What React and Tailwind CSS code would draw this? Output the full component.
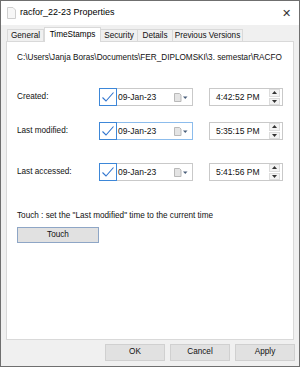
import React from 'react';

const tabs = [
  { label: 'General', w: 'w-[37px]' },
  { label: 'TimeStamps', w: 'w-[57px]', active: true },
  { label: 'Security', w: 'w-[37px]' },
  { label: 'Details', w: 'w-[35px]' },
  { label: 'Previous Versions', w: 'w-[70px]' },
];

const rows = [
  { label: 'Created:', date: '09-Jan-23', time: '4:42:52 PM', mt: 'mt-[24px]' },
  { label: 'Last modified:', date: '09-Jan-23', time: '5:35:15 PM', mt: 'mt-[16px]', focus: true },
  { label: 'Last accessed:', date: '09-Jan-23', time: '5:41:56 PM', mt: 'mt-[23px]' },
];

const Check = () => (
  <svg width="18" height="18" viewBox="0 0 18 18" className="-my-px -ml-px shrink-0">
    <rect x="0.5" y="0.5" width="17" height="17" fill="#fff" stroke="#3d87d8" />
    <path d="M3.5 9.5 L7 13 L14.5 4.5" fill="none" stroke="#2f74cf" strokeWidth="1.1" />
  </svg>
);

const CalIcon = () => (
  <svg width="14" height="9" viewBox="0 0 14 9" className="shrink-0">
    <path d="M0.5 0.5 H5.5 L7 2 V8.5 H0.5 Z" fill="#e4e4e4" stroke="#b9b9b9" />
    <path d="M9 3.5 H13.5 L11.25 6 Z" fill="#4a5f7a" />
  </svg>
);

const Spin = () => (
  <div className="flex flex-col w-[11px] h-[16px] mr-[2px] gap-px">
    <div className="flex-1 bg-[#f3f3f3] border border-[#dcdcdc] flex items-center justify-center">
      <svg width="5" height="3" viewBox="0 0 5 3"><path d="M0 3 L2.5 0 L5 3 Z" fill="#333" /></svg>
    </div>
    <div className="flex-1 bg-[#f3f3f3] border border-[#dcdcdc] flex items-center justify-center">
      <svg width="5" height="3" viewBox="0 0 5 3"><path d="M0 0 L2.5 3 L5 0 Z" fill="#333" /></svg>
    </div>
  </div>
);

export default function App() {
  return (
    <div className="w-[300px] h-[367px] border border-[#6f6f6f] bg-[#f0f0f0] flex flex-col font-['Liberation_Sans',Arial,sans-serif] text-[8.2px] text-[#111] overflow-hidden">
      {/* title bar */}
      <div className="h-[24px] bg-white flex items-center shrink-0">
        <svg width="9" height="12" viewBox="0 0 9 12" className="ml-[6px]">
          <path d="M0.5 0.5 H6 L8.5 3 V11.5 H0.5 Z" fill="#f7f7f7" stroke="#cfcfcf" />
        </svg>
        <span className="ml-[4px] text-[9px] text-black">racfor_22-23 Properties</span>
        <span className="ml-auto mr-[8px] text-[11px] leading-none text-[#333] font-['DejaVu_Sans',sans-serif] font-light">✕</span>
      </div>

      {/* tabs */}
      <div className="flex items-end ml-[6px] mt-[2px] h-[15px] -mb-px relative z-10 shrink-0">
        {tabs.map((t) =>
          t.active ? (
            <div key={t.label} className={`${t.w} h-[15px] bg-white border border-b-0 border-[#d9d9d9] flex items-center justify-center text-black`}>
              {t.label}
            </div>
          ) : (
            <div key={t.label} className={`${t.w} h-[13px] border border-b-0 border-[#d9d9d9] border-l-0 first:border-l flex items-center justify-center`}>
              {t.label}
            </div>
          )
        )}
      </div>

      {/* panel */}
      <div className="mx-[5px] h-[299px] bg-white border border-[#d9d9d9] flex flex-col pl-[10px] pt-[9px] shrink-0">
        <div className="leading-[13px] whitespace-nowrap">C:\Users\Janja Boras\Documents\FER_DIPLOMSKI\3. semestar\RACFO</div>

        {rows.map((r) => (
          <div key={r.label} className={`${r.mt} flex items-center h-[18px]`}>
            <div className="w-[82px]">{r.label}</div>
            <div className={`w-[94px] h-[18px] border ${r.focus ? 'border-[#8cbcec]' : 'border-[#c9c9c9]'} flex items-center`}>
              <Check />
              <span className="ml-px text-[8.5px]">{r.date}</span>
              <span className="ml-auto mr-[4px]"><CalIcon /></span>
            </div>
            <div className="ml-[16px] w-[74px] h-[18px] border border-[#c9c9c9] flex items-center">
              <span className="ml-[6px] text-[8.5px]">{r.time}</span>
              <span className="ml-auto"><Spin /></span>
            </div>
          </div>
        ))}

        <div className="mt-[28px] leading-[13px]">Touch : set the "Last modified" time to the current time</div>
        <div className="mt-[5px] w-[82px] h-[16px] bg-[#e1e1e1] border border-[#8ea6c6] flex items-center justify-center">Touch</div>
      </div>

      {/* footer */}
      <div className="flex justify-end gap-[5px] pr-[4px] mt-[4px]">
        {['OK', 'Cancel', 'Apply'].map((b) => (
          <div key={b} className="w-[60px] h-[17px] bg-[#e1e1e1] border border-[#d0d0d0] flex items-center justify-center">
            {b}
          </div>
        ))}
      </div>
    </div>
  );
}
